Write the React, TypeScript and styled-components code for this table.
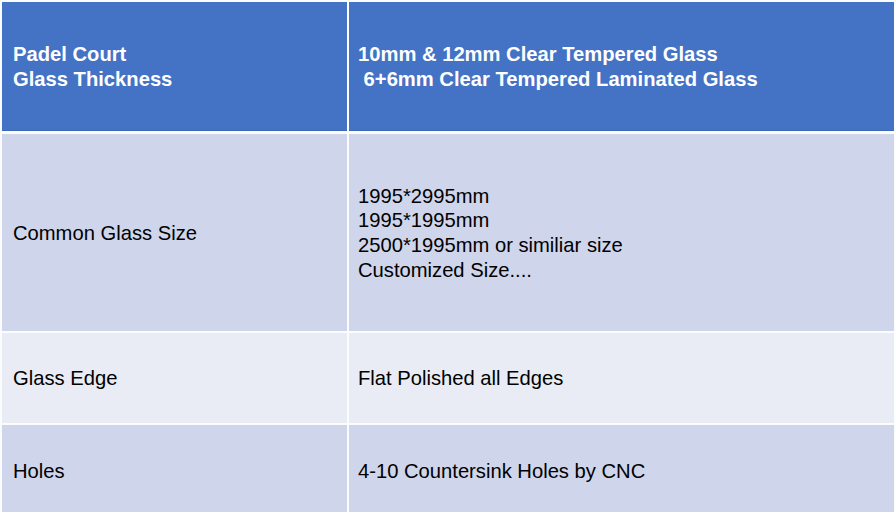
import { Fragment } from 'react';
import styled, { createGlobalStyle } from 'styled-components';

type Row = {
  label: string[];
  value: string[];
  height: number;
  tone: 'head' | 'dark' | 'light';
};

const ROWS: Row[] = [
  {
    label: ['Padel Court', 'Glass Thickness'],
    value: ['10mm & 12mm Clear Tempered Glass', ' 6+6mm Clear Tempered Laminated Glass'],
    height: 129,
    tone: 'head',
  },
  {
    label: ['Common Glass Size'],
    value: ['1995*2995mm', '1995*1995mm', '2500*1995mm or similiar size', 'Customized Size....'],
    height: 197,
    tone: 'dark',
  },
  {
    label: ['Glass Edge'],
    value: ['Flat Polished all Edges'],
    height: 89.5,
    tone: 'light',
  },
  {
    label: ['Holes'],
    value: ['4-10 Countersink Holes by CNC'],
    height: 90,
    tone: 'dark',
  },
];

const TONES = {
  head: '#4472c4',
  dark: '#cfd5ea',
  light: '#e9ebf5',
};

const GlobalStyle = createGlobalStyle`
  html, body {
    margin: 0;
    padding: 0;
    background: #ffffff;
  }
  body {
    font-family: "Liberation Sans", Arial, sans-serif;
    overflow: hidden;
  }
`;

const Table = styled.div`
  display: grid;
  grid-template-columns: 345px 545px;
  column-gap: 2px;
  row-gap: 2.5px;
  padding: 2px 0 0 2px;
  width: 895px;
  height: 512px;
  box-sizing: border-box;
  align-content: start;
  background: #fbfcfe;
`;

const Cell = styled.div<{ $tone: Row['tone']; $height: number; $pad: number }>`
  display: flex;
  flex-direction: column;
  justify-content: center;
  height: ${({ $height }) => $height}px;
  padding-left: ${({ $pad }) => $pad}px;
  padding-top: 2px;
  background: ${({ $tone }) => TONES[$tone]};
  color: ${({ $tone }) => ($tone === 'head' ? '#ffffff' : '#000000')};
  font-weight: ${({ $tone }) => ($tone === 'head' ? 700 : 400)};
  font-size: 20.2px;
  line-height: ${({ $tone }) => ($tone === 'head' ? '25px' : '24.6px')};
  box-sizing: border-box;
  ${({ $tone }) => ($tone === 'head' ? 'border-bottom: 1px solid #3d68b8;' : '')}
`;

const Line = styled.span`
  display: block;
  white-space: pre;
`;

export default function App() {
  return (
    <>
      <GlobalStyle />
      <Table>
        {ROWS.map((row) => (
          <Fragment key={row.label[0]}>
            <Cell $tone={row.tone} $height={row.height} $pad={11}>
              {row.label.map((text) => (
                <Line key={text}>{text}</Line>
              ))}
            </Cell>
            <Cell $tone={row.tone} $height={row.height} $pad={9}>
              {row.value.map((text) => (
                <Line key={text}>{text}</Line>
              ))}
            </Cell>
          </Fragment>
        ))}
      </Table>
    </>
  );
}
